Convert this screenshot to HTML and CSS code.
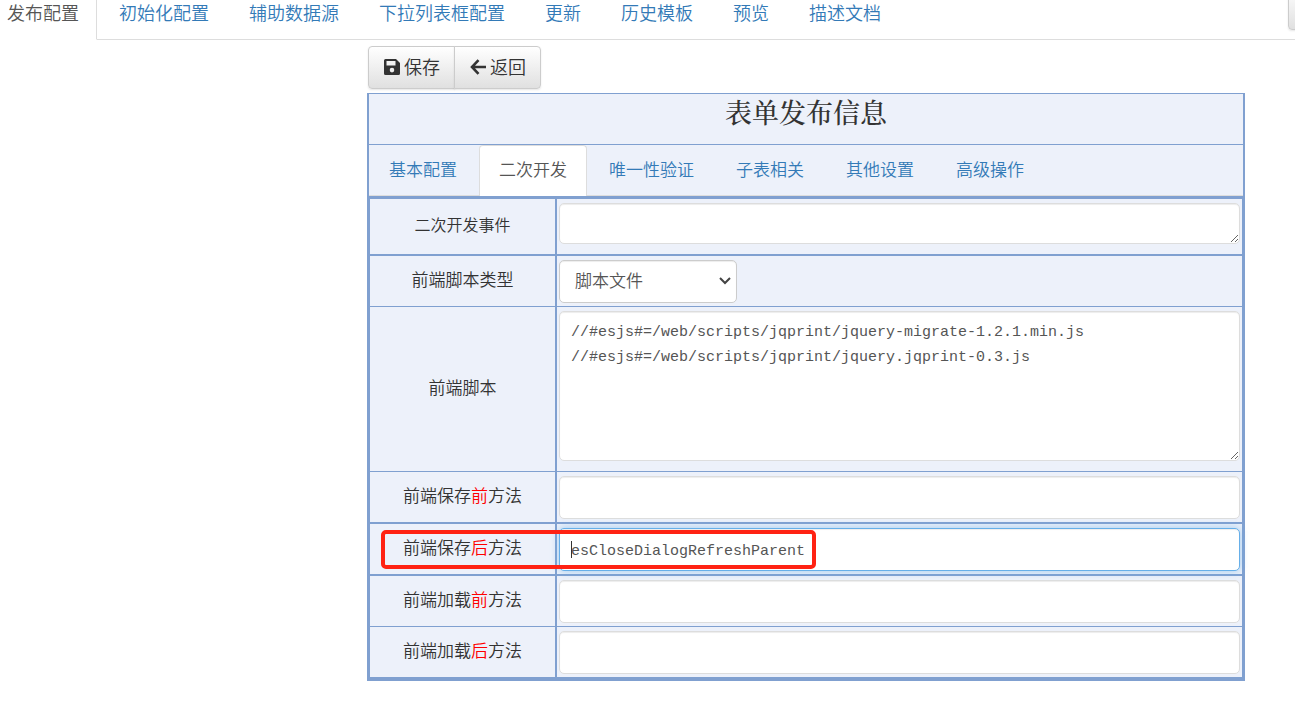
FILE: index.html
```html
<!DOCTYPE html>
<html lang="zh-CN">
<head>
    <meta charset="UTF-8">
    <meta name="viewport" content="width=device-width, initial-scale=1.0">
    <title>表单发布信息</title>
    <link rel="stylesheet" href="styles.css">
</head>
<body>
    <header class="top">
        <nav class="top-tabs">
            <a href="#" class="active">发布配置</a>
            <a href="#">初始化配置</a>
            <a href="#">辅助数据源</a>
            <a href="#">下拉列表框配置</a>
            <a href="#">更新</a>
            <a href="#">历史模板</a>
            <a href="#">预览</a>
            <a href="#">描述文档</a>
        </nav>
        <div class="top-right">
            <button type="button" class="btn btn-more" aria-label="更多"></button>
        </div>
    </header>
    <main class="content">
        <div class="btn-group">
            <button type="button" class="btn">
                <svg width="16" height="16" viewBox="0 0 16 16" aria-hidden="true"><path fill="#333" fill-rule="evenodd" d="M1.500 0H12l4 4v10.500q0 1.500-1.500 1.500h-13Q0 16 0 14.500v-13Q0 0 1.500 0zM2.500 2v4.500H11.500V2zM8 8.800a2.300 2.300 0 1 0 0 4.600a2.300 2.300 0 1 0 0-4.600z"/></svg>
                <span>保存</span>
            </button>
            <button type="button" class="btn">
                <svg width="16" height="16" viewBox="0 0 16 16" aria-hidden="true"><path fill="none" stroke="#333" stroke-width="2.600" d="M8.500 1.200L2 8l6.500 6.800M2 8h14"/></svg>
                <span>返回</span>
            </button>
        </div>
        <form class="panel">
            <h1 class="title">表单发布信息</h1>
            <nav class="form-tabs">
                <a href="#">基本配置</a>
                <a href="#" class="active">二次开发</a>
                <a href="#">唯一性验证</a>
                <a href="#">子表相关</a>
                <a href="#">其他设置</a>
                <a href="#">高级操作</a>
            </nav>
            <table class="grid">
                <tr class="thick">
                    <th class="small"><label for="event">二次开发事件</label></th>
                    <td><textarea id="event" class="control area-short"></textarea></td>
                </tr>
                <tr>
                    <th><label for="type">前端脚本类型</label></th>
                    <td>
                        <div class="select-box">
                            <select id="type" class="control">
                                <option>脚本文件</option>
                            </select>
                            <svg class="arrow" width="12" height="8" viewBox="0 0 12 8" aria-hidden="true"><path fill="none" stroke="#444" stroke-width="2" d="M1 1l5 5l5-5"/></svg>
                        </div>
                    </td>
                </tr>
                <tr>
                    <th><label for="script">前端脚本</label></th>
                    <td><textarea id="script" class="control area-long" spellcheck="false">//#esjs#=/web/scripts/jqprint/jquery-migrate-1.2.1.min.js
//#esjs#=/web/scripts/jqprint/jquery.jqprint-0.3.js</textarea></td>
                </tr>
                <tr class="thick">
                    <th><label for="before-save">前端保存<em>前</em>方法</label></th>
                    <td><input type="text" id="before-save" class="control"></td>
                </tr>
                <tr class="thick">
                    <th><label for="after-save">前端保存<em>后</em>方法</label><span class="mark"></span></th>
                    <td class="editing">
                        <input type="text" id="after-save" class="control focused" value="esCloseDialogRefreshParent" spellcheck="false">
                        <span class="caret"></span>
                    </td>
                </tr>
                <tr>
                    <th><label for="before-load">前端加载<em>前</em>方法</label></th>
                    <td><input type="text" id="before-load" class="control"></td>
                </tr>
                <tr>
                    <th><label for="after-load">前端加载<em>后</em>方法</label></th>
                    <td><input type="text" id="after-load" class="control"></td>
                </tr>
            </table>
        </form>
    </main>
</body>
</html>
```
FILE: styles.css
```css
*{
    margin: 0;
    padding: 0;
    box-sizing: border-box;
}
body{
    background-color: #fff;
    color: #333;
    font-family: "Noto Sans CJK SC", sans-serif;
    font-size: 17px;
    font-weight: 350;
}
a{
    color: #337ab7;
    text-decoration: none;
}
.top{
    display: flex;
    height: 40px;
    overflow: hidden;
}
.top-tabs{
    display: flex;
    margin-left: -10px;
    font-size: 18px;
    line-height: 24px;
    white-space: nowrap;
}
.top-tabs a{
    padding: 0 20px;
    border-bottom: 1px solid #ddd;
}
.top-tabs .active{
    padding: 0 17px;
    border-right: 1px solid #ddd;
    border-bottom-color: transparent;
    color: #555;
}
.top-tabs .active + a{
    padding-left: 22px;
}
.top-right{
    flex: 1;
    border-bottom: 1px solid #ddd;
}
.btn{
    display: flex;
    align-items: center;
    gap: 4px;
    height: 43px;
    padding: 0 14px 0 15px;
    border: 1px solid #ccc;
    border-radius: 4px;
    background: linear-gradient(#fff, #e0e0e0);
    box-shadow: 0 1px 2px rgba(0, 0, 0, .1);
    color: #333;
    font: inherit;
    font-size: 18px;
}
.btn svg{
    margin-bottom: 2px;
}
.btn span{
    padding-bottom: 4px;
}
.btn-more{
    width: 40px;
    margin: -13px -33px 0 auto;
}
.content{
    padding: 6px 50px 36px 367px;
}
.btn-group{
    display: flex;
    margin: 0 0 4px 1px;
}
.btn-group .btn:first-child{
    border-radius: 4px 0 0 4px;
}
.btn-group .btn:last-child{
    margin-left: -1px;
    border-radius: 0 4px 4px 0;
}
.panel{
    border: 2px solid #80a0d0;
    border-width: 1px 2px 0;
    background-color: #edf1fa;
}
.title{
    height: 51px;
    border-bottom: 1px solid #80a0d0;
    font-family: "Noto Serif CJK SC", "Noto Sans CJK SC", serif;
    font-size: 27px;
    font-weight: 500;
    line-height: 35px;
    text-align: center;
}
.form-tabs{
    display: flex;
    gap: 2px;
    height: 51px;
    border-bottom: 1px solid #ddd;
    line-height: 46px;
}
.form-tabs a{
    height: 51px;
    padding: 0 19px;
    border: 1px solid transparent;
    border-bottom: 0;
}
.form-tabs .active{
    border-color: #ddd;
    border-radius: 4px 4px 0 0;
    background-color: #fff;
    color: #555;
}
.grid{
    width: 100%;
    border: 1px solid #80a0d0;
    border-width: 3px 1px 4px;
    border-spacing: 0;
}
.grid th,
.grid td{
    border-bottom: 1px solid #80a0d0;
}
.grid .thick th,
.grid .thick td{
    border-bottom-width: 2px;
}
.grid tr:last-child th,
.grid tr:last-child td{
    border-bottom: 0;
}
.grid th{
    position: relative;
    width: 187px;
    padding-bottom: 5px;
    border-right: 2px solid #80a0d0;
    font-weight: 350;
    text-align: center;
}
.grid .small{
    font-size: 16px;
}
.grid td{
    padding: 4px 2px 3px;
}
.grid em{
    color: #f00;
    font-style: normal;
}
.control{
    display: block;
    width: 100%;
    height: 43px;
    padding: 10px 11px 6px;
    border: 1px solid #ddd;
    border-radius: 5px;
    background-color: #fff;
    box-shadow: inset 0 1px 1px rgba(0, 0, 0, .075);
    color: #555;
    font-family: "Liberation Mono", "Noto Sans CJK SC", monospace;
    font-size: 15px;
    line-height: 25px;
}
.select-box{
    position: relative;
    width: 178px;
}
select.control{
    padding: 0 15px 4px;
    border-color: #ccc;
    font-family: "Noto Sans CJK SC", sans-serif;
    font-size: 17px;
    font-weight: 350;
    appearance: none;
}
.arrow{
    position: absolute;
    top: 17px;
    right: 6px;
    pointer-events: none;
}
textarea.control{
    margin-bottom: 7px;
    padding: 8px 11px;
}
.area-short{
    height: 41px;
}
.area-long{
    height: 150px;
}
.focused{
    border-color: #66afe9;
    box-shadow: inset 0 1px 1px rgba(0, 0, 0, .075), 0 0 8px rgba(102, 175, 233, .6);
}
.editing{
    position: relative;
}
.caret{
    position: absolute;
    top: 17px;
    left: 14px;
    width: 1px;
    height: 17px;
    background-color: #333;
}
.mark{
    position: absolute;
    z-index: 1;
    top: 6px;
    left: 11px;
    width: 435px;
    height: 39px;
    border: 4px solid #ff2213;
    border-radius: 5px;
    pointer-events: none;
}
```
